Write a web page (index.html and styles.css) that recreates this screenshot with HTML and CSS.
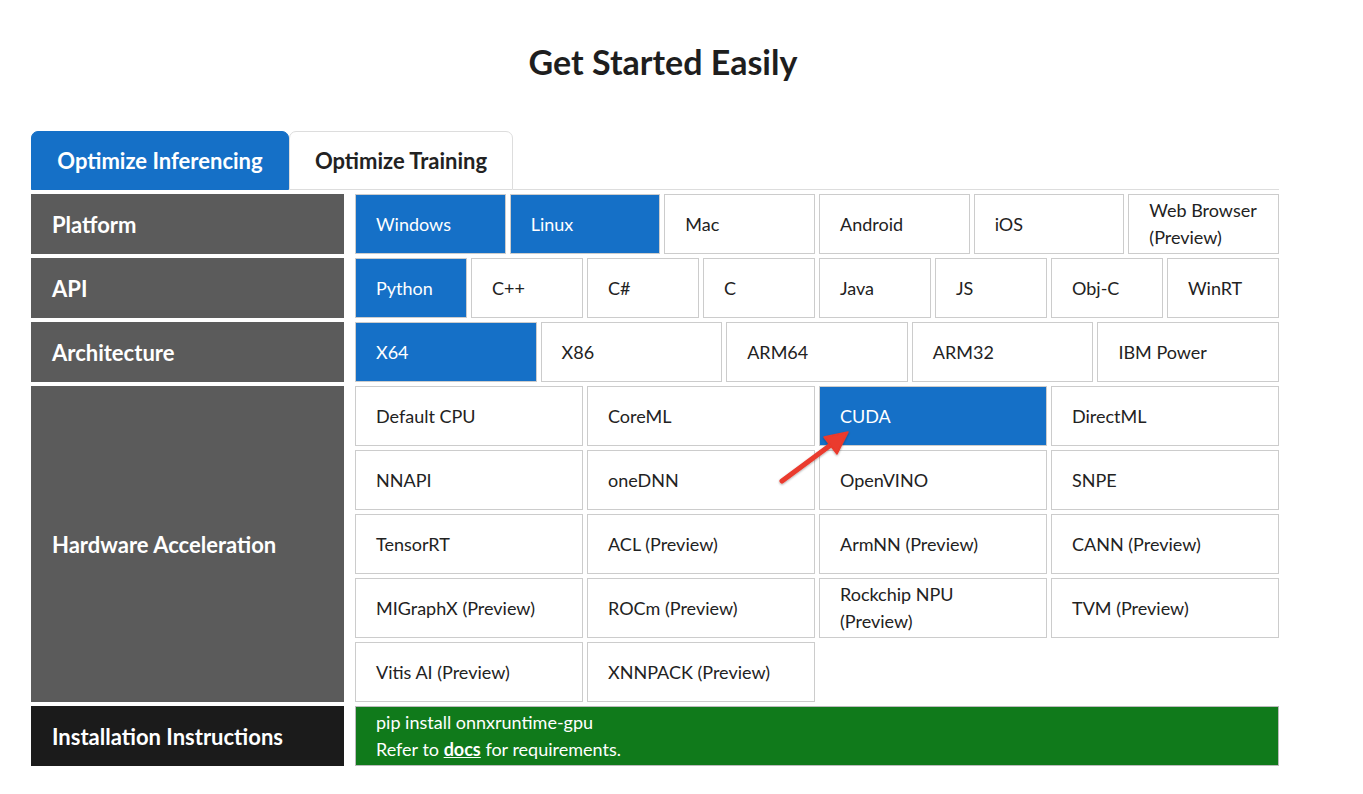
FILE: index.html
```html
<!DOCTYPE html>
<html lang="en">
<head>
<meta charset="utf-8">
<title>Get Started Easily</title>
<link rel="stylesheet" href="styles.css">
</head>
<body>
<div class="page">
  <h1 class="title">Get Started Easily</h1>
  <div class="widget">
    <div class="tabs">
      <div class="tab tab-active">Optimize Inferencing</div>
      <div class="tab">Optimize Training</div>
      <div class="tab-fill"></div>
    </div>

    <div class="row">
      <div class="label">Platform</div>
      <div class="opts cols-6">
        <div class="opt sel">Windows</div>
        <div class="opt sel">Linux</div>
        <div class="opt">Mac</div>
        <div class="opt">Android</div>
        <div class="opt">iOS</div>
        <div class="opt">Web Browser<br>(Preview)</div>
      </div>
    </div>

    <div class="row">
      <div class="label">API</div>
      <div class="opts cols-8">
        <div class="opt sel">Python</div>
        <div class="opt">C++</div>
        <div class="opt">C#</div>
        <div class="opt">C</div>
        <div class="opt">Java</div>
        <div class="opt">JS</div>
        <div class="opt">Obj-C</div>
        <div class="opt">WinRT</div>
      </div>
    </div>

    <div class="row">
      <div class="label">Architecture</div>
      <div class="opts cols-5">
        <div class="opt sel">X64</div>
        <div class="opt">X86</div>
        <div class="opt">ARM64</div>
        <div class="opt">ARM32</div>
        <div class="opt">IBM Power</div>
      </div>
    </div>

    <div class="row">
      <div class="label">Hardware Acceleration</div>
      <div class="opts cols-4">
        <div class="opt">Default CPU</div>
        <div class="opt">CoreML</div>
        <div class="opt sel">CUDA</div>
        <div class="opt">DirectML</div>
        <div class="opt">NNAPI</div>
        <div class="opt">oneDNN</div>
        <div class="opt">OpenVINO</div>
        <div class="opt">SNPE</div>
        <div class="opt">TensorRT</div>
        <div class="opt">ACL (Preview)</div>
        <div class="opt">ArmNN (Preview)</div>
        <div class="opt">CANN (Preview)</div>
        <div class="opt">MIGraphX (Preview)</div>
        <div class="opt">ROCm (Preview)</div>
        <div class="opt">Rockchip NPU<br>(Preview)</div>
        <div class="opt">TVM (Preview)</div>
        <div class="opt">Vitis AI (Preview)</div>
        <div class="opt">XNNPACK (Preview)</div>
      </div>
    </div>

    <div class="row">
      <div class="label label-dark">Installation Instructions</div>
      <div class="install">
        <div>pip install onnxruntime-gpu</div>
        <div>Refer to <a class="docs" href="#">docs</a> for requirements.</div>
      </div>
    </div>
  </div>

  <svg class="arrow" width="90" height="75" viewBox="0 0 90 75" aria-hidden="true">
    <defs>
      <filter id="sh" x="-30%" y="-30%" width="160%" height="160%">
        <feDropShadow dx="0" dy="1" stdDeviation="1.2" flood-color="#000" flood-opacity="0.35"/>
      </filter>
    </defs>
    <g filter="url(#sh)" fill="#ea3a2d" stroke="#ea3a2d">
      <line x1="12" y1="61" x2="62" y2="24" stroke-width="5" stroke-linecap="round"/>
      <polygon points="78,12 67,34 54,17" stroke-width="1.5" stroke-linejoin="round"/>
    </g>
  </svg>
</div>
</body>
</html>
```

FILE: styles.css
```css
* { box-sizing: border-box; }

html, body {
  margin: 0;
  padding: 0;
  background: #ffffff;
}

body {
  font-family: Lato, "Open Sans", "Liberation Sans", sans-serif;
  color: #222222;
}

.page {
  position: relative;
  width: 1363px;
  padding: 41px 0 0 31px;
}

.title {
  margin: 0;
  width: 1264px;
  text-align: center;
  font-size: 34px;
  line-height: 42px;
  font-weight: 700;
  color: #1e1e1e;
}

.widget {
  width: 1248px;
  margin-top: 48px;
}

.tabs {
  display: flex;
  height: 59px;
  margin-bottom: 4px;
}

.tab {
  display: flex;
  align-items: center;
  justify-content: center;
  height: 59px;
  font-size: 22px;
  font-weight: 700;
  color: #222222;
  background: #ffffff;
  border: 1px solid #dddddd;
  border-radius: 7px 7px 0 0;
  width: 224px;
}

.tab-active {
  width: 258px;
  background: #1570c7;
  border-color: #1570c7;
  color: #ffffff;
}

.tab-fill {
  flex: 1;
  border-bottom: 1px solid #dddddd;
}

.row {
  display: flex;
  gap: 11px;
  margin-bottom: 4px;
}

.label {
  width: 313px;
  flex: none;
  display: flex;
  align-items: center;
  padding-left: 21px;
  background: #5b5b5b;
  color: #ffffff;
  font-size: 22px;
  font-weight: 700;
}

.label-dark {
  background: #1b1b1b;
}

.opts {
  width: 924px;
  display: grid;
  gap: 4px;
  grid-auto-rows: 60px;
}

.cols-6 { grid-template-columns: repeat(6, 1fr); }
.cols-8 { grid-template-columns: repeat(8, 1fr); }
.cols-5 { grid-template-columns: repeat(5, 1fr); }
.cols-4 { grid-template-columns: repeat(4, 1fr); }

.opt {
  display: flex;
  align-items: center;
  padding-left: 20px;
  border: 1px solid #cccccc;
  background: #ffffff;
  font-size: 18px;
  line-height: 27px;
  color: #222222;
}

.opt.sel {
  background: #1570c7;
  color: #ffffff;
}

.install {
  width: 924px;
  height: 60px;
  display: flex;
  flex-direction: column;
  justify-content: center;
  padding-left: 20px;
  background: #107a1b;
  border: 1px solid #bbbbbb;
  color: #ffffff;
  font-size: 18px;
  line-height: 27px;
}

.docs {
  color: #ffffff;
  font-weight: 700;
  text-decoration: underline;
}

.arrow {
  position: absolute;
  left: 770px;
  top: 420px;
}
```
